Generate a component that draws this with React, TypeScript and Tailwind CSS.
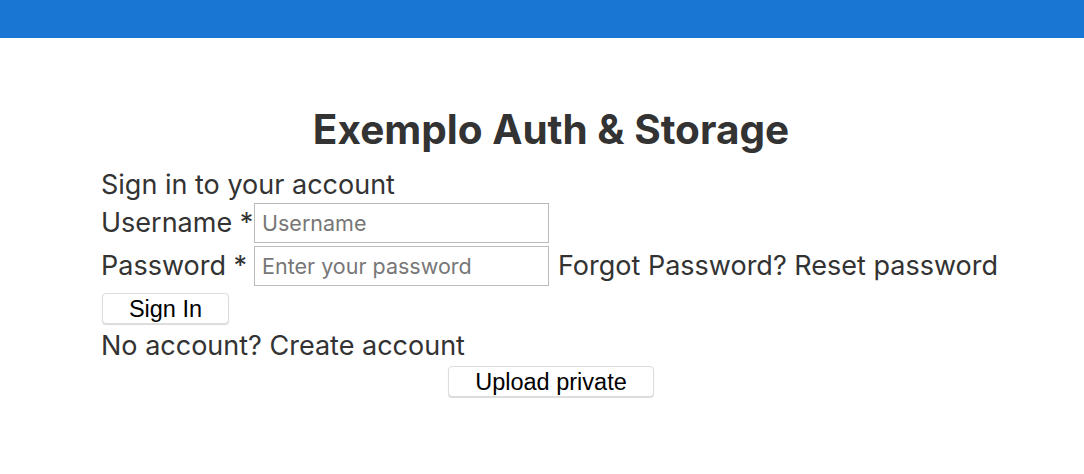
export default function App() {
  return (
    <div className="min-h-[474px] bg-white font-['Inter','Noto_Sans',sans-serif] text-[#333333]">
      <div className="h-[38px] bg-[#1976d2]" />
      <div className="flex justify-center pl-[18px]">
        <div className="w-[900px] pt-[70px]">
          <h1 className="text-center text-[40.5px] font-bold leading-[44px] text-[#333333]">
            Exemplo Auth &amp; Storage
          </h1>
          <div className="mt-[18px] text-[27px] leading-[30px]">
            <div className="h-[30px]">Sign in to your account</div>
            <div className="mt-[3px] flex items-center">
              <span className="w-[153px] whitespace-nowrap">Username *</span>
              <input
                className="h-[40px] w-[295px] border border-[#bbbbbb] px-[7px] text-[21.5px] text-[#333] placeholder:text-[#777777] outline-none"
                placeholder="Username"
              />
            </div>
            <div className="mt-[3px] flex items-center">
              <span className="w-[153px] whitespace-nowrap">Password *</span>
              <input
                type="password"
                className="h-[40px] w-[295px] border border-[#bbbbbb] px-[7px] text-[21.5px] text-[#333] placeholder:text-[#777777] outline-none"
                placeholder="Enter your password"
              />
              <span className="ml-[9px] whitespace-nowrap">Forgot Password? Reset password</span>
            </div>
            <button className="ml-[1px] mt-[7px] flex h-[31px] w-[127px] items-center justify-center rounded-[4px] border border-[#dddddd] bg-white font-['Liberation_Sans',sans-serif] text-[23.5px] text-black shadow-[0_1px_1px_rgba(0,0,0,0.15)]">
              Sign In
            </button>
            <div className="mt-[7px] h-[30px]">No account? Create account</div>
            <div className="mt-[5px] flex justify-center">
              <button className="flex h-[31px] w-[206px] items-center justify-center rounded-[4px] border border-[#dddddd] bg-white font-['Liberation_Sans',sans-serif] text-[23.5px] text-black shadow-[0_1px_1px_rgba(0,0,0,0.15)]">
                Upload private
              </button>
            </div>
          </div>
        </div>
      </div>
    </div>
  );
}
